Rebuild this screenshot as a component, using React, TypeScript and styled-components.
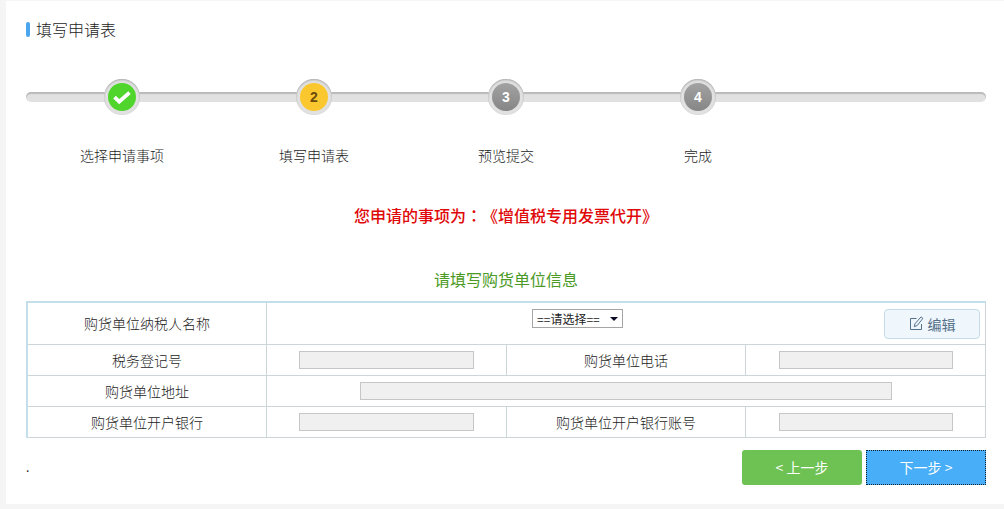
import React from "react";
import styled, { createGlobalStyle, css } from "styled-components";

const GlobalStyle = createGlobalStyle`
  *, *::before, *::after { box-sizing: border-box; }
  body {
    margin: 0;
    background: #f5f5f5;
    color: #1c1c1c;
    font: 14px/20px "Noto Sans CJK SC", "Liberation Sans", sans-serif;
  }
  button, input, select { font: inherit; margin: 0; }
`;

const Page = styled.div`
  padding: 1px 0 5px 6px;
`;

const Panel = styled.main`
  background: #fff;
  padding: 18px 18px 19px 20px;
`;

const Title = styled.h1`
  display: flex;
  align-items: center;
  gap: 6px;
  margin: 0;
  font-size: 16px;
  font-weight: 300;
  line-height: 20px;

  &::before {
    content: "";
    width: 4px;
    height: 15px;
    border-radius: 2px;
    background: #4ba6ee;
  }
`;

const Steps = styled.ol`
  position: relative;
  display: grid;
  grid-template-columns: repeat(5, 1fr);
  list-style: none;
  margin: 40px 0 0;
  padding: 0;

  &::before {
    content: "";
    position: absolute;
    top: 13px;
    left: 0;
    right: 0;
    height: 10px;
    border-radius: 5px;
    background: #e1e1e1;
    box-shadow: inset 0 2px 1px #bababa;
  }
`;

const Step = styled.li`
  position: relative;
  display: flex;
  flex-direction: column;
  align-items: center;
  gap: 30px;
  font-weight: 300;
`;

type State = "done" | "current" | "todo";

const badgeLook = {
  done: css`background: #4fd52c; color: #fff;`,
  current: css`background: #fbc72f; color: #6b4a0c;`,
  todo: css`background: linear-gradient(#a2a2a2, #868686); color: #fff;`,
};

const Ring = styled.span`
  display: block;
  padding: 4px;
  border-radius: 50%;
  background: #e1e1e1;
  box-shadow: inset 0 1px 2px #a8a8a8;
`;

const Badge = styled.span<{ $state: State }>`
  display: flex;
  align-items: center;
  justify-content: center;
  width: 28px;
  height: 28px;
  border-radius: 50%;
  font: bold 14px/28px "Liberation Sans", Arial, sans-serif;
  ${(p) => badgeLook[p.$state]}
`;

const Notice = styled.p`
  margin: 38px 0 0;
  color: #e00808;
  font-size: 16px;
  font-weight: 500;
  line-height: 24px;
  text-align: center;
  text-spacing-trim: space-all;
`;

const Colon = styled.span`
  font-family: "Noto Sans CJK TC", sans-serif;
`;

const Form = styled.form`
  margin-top: 40px;
`;

const Table = styled.table`
  width: 100%;
  table-layout: fixed;
  border-collapse: collapse;
  border: 1px solid #ccd9dd;
  border-top: 2px solid #c5deeb;
  border-left: 2px solid #c5deeb;

  caption {
    padding-bottom: 10px;
    color: #4b9a26;
    font-size: 16px;
    line-height: 24px;
  }
`;

const Row = styled.tr<{ $tall?: boolean }>`
  height: ${(p) => (p.$tall ? 42 : 31)}px;
`;

const Label = styled.th`
  padding: 0;
  border: 1px solid #ccd5d8;
  font-weight: 300;
  text-align: center;
`;

const Cell = styled.td`
  padding: 0;
  border: 1px solid #ccd5d8;
  text-align: center;
`;

const Field = styled.input<{ $wide?: boolean }>`
  display: block;
  width: ${(p) => (p.$wide ? "74%" : "73%")};
  height: 18px;
  margin: 0 auto;
  padding: 0 4px;
  border: 1px solid #c6c6c6;
  border-radius: 0;
  background: #f0f0f0;
  font-size: 12px;
`;

const NameRow = styled.div`
  display: flex;
  align-items: flex-start;
  padding: 1px 5px 0 4px;
`;

const PickerArea = styled.div`
  flex: 1;
  display: flex;
  justify-content: center;
`;

const Picker = styled.span`
  position: relative;
  display: block;

  svg {
    position: absolute;
    top: 8px;
    right: 5px;
    pointer-events: none;
  }
`;

const Select = styled.select`
  display: block;
  width: 91px;
  height: 19px;
  padding: 0 16px 0 4px;
  appearance: none;
  border: 1px solid #a5a5a5;
  border-radius: 0;
  background: #fff;
  color: #222;
  font-size: 12px;
  line-height: 17px;
`;

const EditButton = styled.button`
  display: flex;
  align-items: center;
  justify-content: center;
  gap: 4px;
  width: 96px;
  height: 30px;
  padding: 0;
  border: 1px solid #c6dce8;
  border-radius: 4px;
  background: #eff7fd;
  color: #54708a;
`;

const Footer = styled.div`
  display: flex;
  align-items: center;
  gap: 4px;
  margin-top: 12px;
`;

const Dot = styled.span`
  flex: 1;
  font-size: 12px;
`;

const NavButton = styled.button<{ $primary?: boolean }>`
  width: 120px;
  height: 35px;
  padding: 0;
  border: ${(p) => (p.$primary ? "1px dotted #123" : "0")};
  border-radius: ${(p) => (p.$primary ? 0 : 3)}px;
  background: ${(p) => (p.$primary ? "#47aef7" : "#6dc253")};
  color: #fff;
`;

const CheckIcon = () => (
  <svg width="20" height="16" viewBox="0 0 20 16" role="img" aria-label="已完成">
    <path d="M2.5 8.2 7.2 12.6 17.5 3.6" fill="none" stroke="#fff" strokeWidth="3.8" />
  </svg>
);

const EditIcon = () => (
  <svg width="15" height="15" viewBox="0 0 15 15" fill="none" stroke="currentColor" aria-hidden="true">
    <path d="M7.5 2.5H1.5v11h11V8" />
    <path d="M12 .9 13.9 2.4 8.2 9.5 5.3 10.7 5.9 7.9z" strokeLinejoin="round" />
  </svg>
);

const steps: { label: string; state: State }[] = [
  { label: "选择申请事项", state: "done" },
  { label: "填写申请表", state: "current" },
  { label: "预览提交", state: "todo" },
  { label: "完成", state: "todo" },
];

export default function App() {
  return (
    <>
      <GlobalStyle />
      <Page>
        <Panel>
          <Title>填写申请表</Title>
          <Steps>
            {steps.map((s, i) => (
              <Step key={s.label} aria-current={s.state === "current" ? "step" : undefined}>
                <Ring>
                  <Badge $state={s.state}>{s.state === "done" ? <CheckIcon /> : i + 1}</Badge>
                </Ring>
                {s.label}
              </Step>
            ))}
          </Steps>
          <Notice>您申请的事项为<Colon lang="zh-TW">：</Colon>《增值税专用发票代开》</Notice>
          <Form onSubmit={(e) => e.preventDefault()}>
            <Table>
              <caption>请填写购货单位信息</caption>
              <tbody>
                <Row $tall>
                  <Label scope="row"><label htmlFor="buyer">购货单位纳税人名称</label></Label>
                  <Cell colSpan={3}>
                    <NameRow>
                      <PickerArea>
                        <Picker>
                          <Select id="buyer"><option>==请选择==</option></Select>
                          <svg width="8" height="4" viewBox="0 0 8 4" aria-hidden="true">
                            <path d="M0 0h8L4 4z" fill="#0a0a28" />
                          </svg>
                        </Picker>
                      </PickerArea>
                      <EditButton type="button"><EditIcon />编辑</EditButton>
                    </NameRow>
                  </Cell>
                </Row>
                <Row>
                  <Label scope="row"><label htmlFor="taxNo">税务登记号</label></Label>
                  <Cell><Field id="taxNo" readOnly /></Cell>
                  <Label scope="row"><label htmlFor="phone">购货单位电话</label></Label>
                  <Cell><Field id="phone" readOnly /></Cell>
                </Row>
                <Row>
                  <Label scope="row"><label htmlFor="address">购货单位地址</label></Label>
                  <Cell colSpan={3}><Field id="address" $wide readOnly /></Cell>
                </Row>
                <Row>
                  <Label scope="row"><label htmlFor="bank">购货单位开户银行</label></Label>
                  <Cell><Field id="bank" readOnly /></Cell>
                  <Label scope="row"><label htmlFor="account">购货单位开户银行账号</label></Label>
                  <Cell><Field id="account" readOnly /></Cell>
                </Row>
              </tbody>
            </Table>
            <Footer>
              <Dot>.</Dot>
              <NavButton type="button">&lt; 上一步</NavButton>
              <NavButton type="submit" $primary>下一步 &gt;</NavButton>
            </Footer>
          </Form>
        </Panel>
      </Page>
    </>
  );
}
